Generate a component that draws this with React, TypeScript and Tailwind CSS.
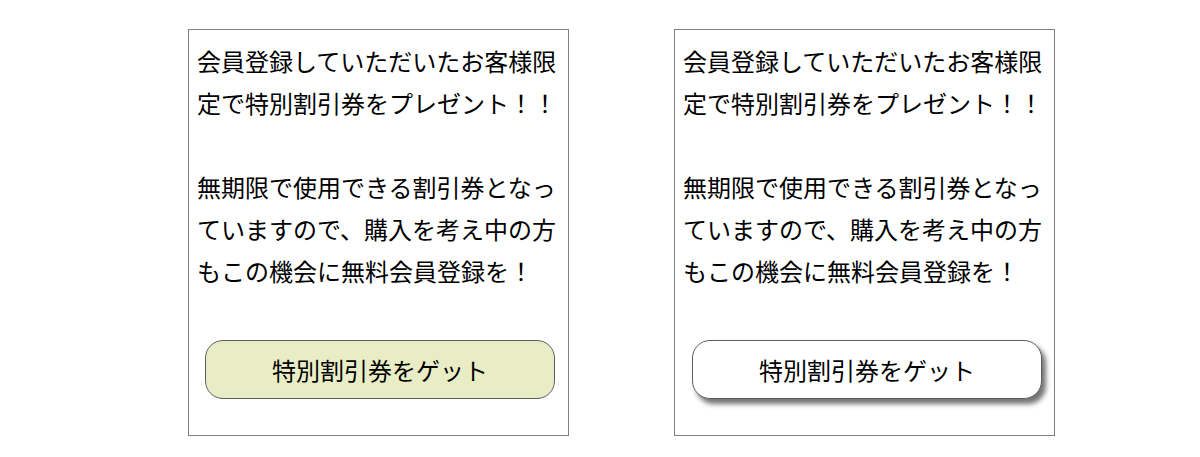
import React from "react";

const paragraphs = [
  ["会員登録していただいたお客様限", "定で特別割引券をプレゼント！！"],
  ["無期限で使用できる割引券となっ", "ていますので、購入を考え中の方", "もこの機会に無料会員登録を！"],
];

function Card({ variant }: { variant: "flat" | "raised" }) {
  return (
    <div className="flex h-[407px] w-[381px] flex-col border border-[#808080] bg-white px-[8px] pt-[10px]">
      <div className="text-[24px] leading-[42px] text-black">
        {paragraphs.map((lines, i) => (
          <p key={i} className={i > 0 ? "mt-[42px]" : ""}>
            {lines.map((l) => (
              <span key={l} className="block whitespace-nowrap">
                {l}
              </span>
            ))}
          </p>
        ))}
      </div>
      <div className="mt-[48px] flex">
        {variant === "flat" ? (
          <button className="ml-[8px] flex h-[59px] w-[350px] items-center justify-center rounded-[18px] border border-[#5e5e5e] bg-[#e8edc6] text-[24px] text-black">
            特別割引券をゲット
          </button>
        ) : (
          <button className="ml-[9px] flex h-[59px] w-[350px] items-center justify-center rounded-[18px] border border-[#5e5e5e] bg-white text-[24px] text-black shadow-[4px_5px_5px_rgba(0,0,0,0.55)]">
            特別割引券をゲット
          </button>
        )}
      </div>
    </div>
  );
}

export default function App() {
  return (
    <div
      className="flex h-[457px] w-[1200px] gap-[105px] bg-white pl-[188px] pt-[29px]"
      style={{ fontFamily: '"Noto Sans CJK JP", "Noto Sans", sans-serif' }}
    >
      <Card variant="flat" />
      <Card variant="raised" />
    </div>
  );
}
